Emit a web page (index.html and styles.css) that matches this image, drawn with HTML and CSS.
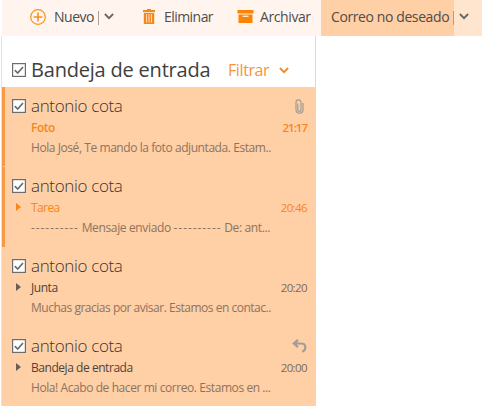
FILE: index.html
```html
<!DOCTYPE html>
<html lang="es">
<head>
<meta charset="utf-8">
<title>Bandeja de entrada</title>
<link rel="stylesheet" href="styles.css">
</head>
<body>
<svg class="defs" width="0" height="0">
  <symbol id="check" viewBox="0 0 14 14"><rect x=".6" y=".6" width="12.8" height="12.8" fill="#fff" stroke="#6c6c6c" stroke-width="1.2"/><path d="M2.8 7.2 5.7 10 11 4" fill="none" stroke="#6c6c6c" stroke-width="1.7"/></symbol>
  <symbol id="chevron" viewBox="0 0 10 7"><path d="M.9 1 5 5.2 9.1 1" fill="none" stroke="currentColor" stroke-width="1.8"/></symbol>
</svg>
<header class="toolbar">
  <div class="command new">
    <svg class="plus" width="16" height="16" viewBox="0 0 16 16"><g fill="none" stroke="#f7911e" stroke-width="1.2"><circle cx="8" cy="8" r="7.3"/><path d="M8 3.6v8.8M3.6 8h8.8" stroke-width="1.6"/></g></svg>
    <span class="label nuevo">Nuevo</span><i class="sep"></i><svg class="chev" width="10" height="7"><use href="#chevron"/></svg>
  </div>
  <div class="command delete">
    <svg width="12" height="15" viewBox="0 0 12 15"><g fill="#f7861a"><path d="M4 0h4v1h4v2H0V1h4z"/><path d="M.8 3.8h10.4V15H.8z"/></g><path d="M3.6 5v8.5M6 5v8.5M8.4 5v8.5" stroke="#ffe0c4" stroke-width="1"/></svg>
    <span class="label eliminar">Eliminar</span>
  </div>
  <div class="command archive">
    <svg width="17" height="13" viewBox="0 0 17 13"><path d="M.5 0h16v3.4H.5zM1.5 4.4h14V13h-14z" fill="#ff8200"/><path d="M5.5 6.3h6" stroke="#fff0e2" stroke-width="1.3"/></svg>
    <span class="label archivar">Archivar</span>
  </div>
  <div class="junk"><span class="label deseado">Correo no deseado</span></div>
  <div class="junk-more"><i class="sep"></i><svg class="chev" width="10" height="7"><use href="#chevron"/></svg></div>
</header>
<main class="list">
  <div class="heading">
    <svg class="box" width="14" height="14"><use href="#check"/></svg>
    <h1>Bandeja de entrada</h1>
    <span class="filter">Filtrar</span>
    <svg class="filter-chev" width="10" height="7"><use href="#chevron"/></svg>
  </div>
  <article class="mail unread">
    <div class="sender"><svg class="box" width="14" height="14"><use href="#check"/></svg><span class="name">antonio cota</span>
      <svg class="clip" width="9" height="15" viewBox="0 0 9 15"><path d="M2.8 4.5v6.2a1.6 1.6 0 0 0 3.2 0V3.3a2.5 2.5 0 0 0-5 0v7.4a3.5 3.5 0 0 0 7 0V4" fill="none" stroke="#a19b96" stroke-width="1.2"/></svg></div>
    <div class="subject"><span class="topic foto">Foto</span><time>21:17</time></div>
    <p class="s1">Hola José, Te mando la foto adjuntada. Estam..</p>
  </article>
  <article class="mail unread">
    <div class="sender"><svg class="box" width="14" height="14"><use href="#check"/></svg><span class="name">antonio cota</span></div>
    <div class="subject"><i class="tri"></i><span class="topic tarea">Tarea</span><time>20:46</time></div>
    <p class="s2"><span class="dashes">----------</span> Mensaje enviado <span class="dashes">----------</span> De: ant...</p>
  </article>
  <article class="mail">
    <div class="sender"><svg class="box" width="14" height="14"><use href="#check"/></svg><span class="name">antonio cota</span></div>
    <div class="subject"><i class="tri"></i><span class="topic junta">Junta</span><time>20:20</time></div>
    <p class="s3">Muchas gracias por avisar. Estamos en contac..</p>
  </article>
  <article class="mail">
    <div class="sender"><svg class="box" width="14" height="14"><use href="#check"/></svg><span class="name">antonio cota</span>
      <svg class="reply" width="15" height="14" viewBox="0 0 15 14"><path d="M6 .8 1.8 4.5 6 8.2M2 4.5h7.2c5.2 0 5.5 6.5 1 8.3" fill="none" stroke="#a39d98" stroke-width="2.2"/></svg></div>
    <div class="subject"><i class="tri"></i><span class="topic bandeja">Bandeja de entrada</span><time>20:00</time></div>
    <p class="s4">Hola! Acabo de hacer mi correo. Estamos en ...</p>
  </article>
</main>
</body>
</html>
```
FILE: styles.css
```css
* { box-sizing: border-box; }
body { margin: 0; height: 406px; overflow: hidden; background: #fff; font-family: "Open Sans", "Noto Sans", sans-serif; color: #504c48; }
svg { display: block; flex: none; }
.defs { position: absolute; }
.toolbar { display: flex; height: 36px; margin: 0 1px 0 2px; background: #fff5ee; }
.command, .junk, .junk-more { display: flex; align-items: center; height: 36px; padding-bottom: 3px; flex: none; }
.label { font-size: 14px; line-height: 20px; white-space: nowrap; letter-spacing: -.4px; }
.new { width: 141px; padding-left: 28px; }
.new .label { width: 44px; margin-left: 8px; letter-spacing: -.5px; }
.delete { width: 94px; }
.delete .label { margin-left: 9px; letter-spacing: -.55px; }
.archive { width: 84px; }
.archive .label { margin-left: 6px; }
.sep { width: 1px; height: 14px; margin-top: 3px; background: #aaa198; flex: none; }
.chev { margin-left: 5px; color: #666; }
.junk-more .chev { margin-left: 5px; }
.junk { width: 132px; padding-left: 10px; background: #ffcfa6; }
.junk-more { flex: 1; background: linear-gradient(to right, #ffcfa6 1px, #ffe4ce 1px); }
.list { width: 315px; margin-left: 1px; border-left: 1px solid #e3e3e3; border-right: 1px solid #ddd9d6; height: 370px; }
.heading { display: flex; align-items: center; height: 51px; padding: 17px 0 0 10px; }
.box { margin-right: 5px; }
h1 { margin: 0; width: 197px; font-size: 20px; line-height: 28px; font-weight: 400; white-space: nowrap; letter-spacing: -.2px; color: #404040; }
.filter { width: 51px; font-size: 16px; line-height: 28px; color: #f6953a; letter-spacing: -.4px; }
.filter-chev { color: #f28a2a; }
.mail { height: 80px; padding: 7px 8px 0 10px; background: #ffcfa6; }
.unread { border-left: 3px solid #f59a47; padding-left: 7px; }
.unread:nth-of-type(1) { border-bottom: 1px solid #ffcfa6; }
.sender { display: flex; align-items: center; height: 24px; }
.name { flex: 1; font-size: 17px; line-height: 24px; font-weight: 300; color: #3c3530; letter-spacing: -.35px; }
.clip { margin-right: 3px; }
.subject { display: flex; align-items: center; height: 19px; padding-left: 19px; font-size: 12px; line-height: 19px; position: relative; color: #4d433b; }
.topic { flex: 1; letter-spacing: -.45px; }
.tarea { letter-spacing: -.6px; }
.tri { position: absolute; left: 4px; top: 5px; border: 4px solid transparent; border-left: 5px solid #6b5d52; border-right: 0; }
.unread .tri { border-left-color: #fa8518; }
time { color: #7d6a5b; font-size: 11.5px; letter-spacing: -.6px; }
.unread .subject, .unread time { color: #fa8518; }
.foto, .foto + time { font-weight: 600; }
.foto + time { letter-spacing: -1px; }
p { margin: 0; padding: 1px 0 0 19px; font-size: 12px; line-height: 20px; color: #8d7461; white-space: nowrap; }
.s1 { letter-spacing: -.43px; }
.s2 { letter-spacing: -.36px; }
.s3 { letter-spacing: -.48px; }
.s4 { letter-spacing: -.42px; }
.dashes { letter-spacing: .93px; }
```
